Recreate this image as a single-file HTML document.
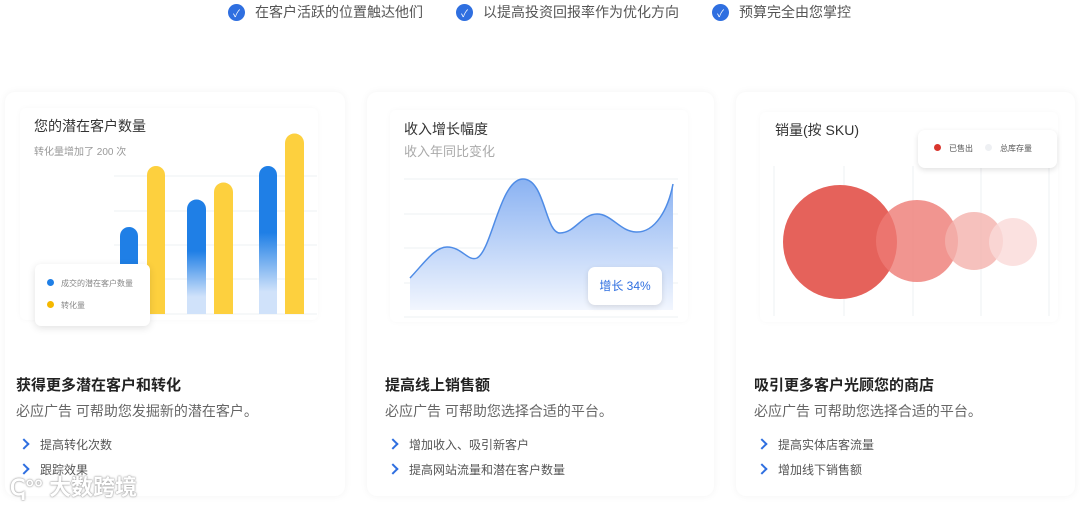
<!DOCTYPE html>
<html><head><meta charset="utf-8"><style>
*{margin:0;padding:0;box-sizing:border-box}
body{width:1080px;height:505px;overflow:hidden;background:#fff;font-family:"Liberation Sans","Noto Sans CJK SC",sans-serif;position:relative}
.a{position:absolute}
.top{top:2px;font-size:14px;color:#555;display:flex;align-items:center;gap:10px}
.ck{width:17px;height:17px;border-radius:50%;background:#2f6fe0;color:#fff;font-size:10px;display:flex;align-items:center;justify-content:center}
.card{background:#fff;border-radius:10px;box-shadow:0 0 8px rgba(0,0,0,.05);top:92px;height:404px}
.panel{background:#fff;border-radius:6px;box-shadow:0 0 6px rgba(0,0,0,.03)}
.t{font-size:15px;font-weight:bold;color:#222;top:374px}
.s{font-size:14px;color:#666;top:401px}
.b{font-size:12px;color:#555}
.b:before{content:"";position:absolute;left:-20px;top:4px;width:6px;height:6px;border-right:2px solid #2f6fe0;border-top:2px solid #2f6fe0;transform:rotate(45deg)}
</style></head><body>
<div class="a top" style="left:228px"><span class="ck">✓</span>在客户活跃的位置触达他们</div>
<div class="a top" style="left:456px"><span class="ck">✓</span>以提高投资回报率作为优化方向</div>
<div class="a top" style="left:712px"><span class="ck">✓</span>预算完全由您掌控</div>

<div class="a card" style="left:5px;width:340px"></div>
<div class="a card" style="left:367px;width:347px"></div>
<div class="a card" style="left:736px;width:339px"></div>

<div class="a panel" style="left:20px;top:108px;width:298px;height:212px"></div>
<div class="a panel" style="left:390px;top:110px;width:298px;height:212px"></div>
<div class="a panel" style="left:760px;top:112px;width:298px;height:210px"></div>

<div class="a" style="left:34px;top:116px;font-size:14px;color:#333">您的潜在客户数量</div>
<div class="a" style="left:34px;top:143px;font-size:10px;color:#999">转化量增加了 200 次</div>
<svg class="a" style="left:0;top:0" width="1080" height="505">
<defs>
<linearGradient id="bl" x1="0" y1="0" x2="0" y2="1" gradientUnits="objectBoundingBox"><stop offset="0.45" stop-color="#1f7fe6"/><stop offset="0.85" stop-color="#d0e2fa"/></linearGradient>
<linearGradient id="ar" x1="0" y1="179" x2="0" y2="310" gradientUnits="userSpaceOnUse"><stop offset="0" stop-color="#8ab2f2"/><stop offset="1" stop-color="#f2f6fe"/></linearGradient>
</defs>
<g stroke="#eef0f3" stroke-width="1">
<line x1="114" y1="176" x2="317" y2="176"/><line x1="114" y1="211" x2="317" y2="211"/><line x1="114" y1="245" x2="317" y2="245"/><line x1="114" y1="279" x2="317" y2="279"/><line x1="114" y1="314" x2="317" y2="314"/>
<line x1="404" y1="179" x2="678" y2="179"/><line x1="404" y1="214" x2="678" y2="214"/><line x1="404" y1="248" x2="678" y2="248"/><line x1="404" y1="283" x2="678" y2="283"/><line x1="404" y1="317" x2="678" y2="317"/>
<line x1="774" y1="166" x2="774" y2="316"/><line x1="844" y1="166" x2="844" y2="316"/><line x1="913" y1="166" x2="913" y2="316"/><line x1="981" y1="166" x2="981" y2="316"/><line x1="1049" y1="166" x2="1049" y2="316"/>
</g>
<path d="M120,236a9,9 0 0 1 18,0V314H120Z" fill="url(#bl)"/>
<path d="M187,209a9.5,9.5 0 0 1 19,0V314H187Z" fill="url(#bl)"/>
<path d="M259,175a9,9 0 0 1 18,0V314H259Z" fill="url(#bl)"/>
<path d="M147,175a9,9 0 0 1 18,0V314H147Z" fill="#fdd03e"/>
<path d="M214,192a9.5,9.5 0 0 1 19,0V314H214Z" fill="#fdd03e"/>
<path d="M285,143a9.5,9.5 0 0 1 19,0V314H285Z" fill="#fdd03e"/>
<path d="M410,278C425,262 435,247 447,247C462,247 468,262 477,258C492,250 500,179 523,179C545,179 545,233 560,233C575,233 582,214 597,214C612,214 620,232 637,232C655,232 668,210 673,184V310H410Z" fill="url(#ar)"/>
<path d="M410,278C425,262 435,247 447,247C462,247 468,262 477,258C492,250 500,179 523,179C545,179 545,233 560,233C575,233 582,214 597,214C612,214 620,232 637,232C655,232 668,210 673,184" fill="none" stroke="#4f8ce6" stroke-width="1.5"/>
<circle cx="840" cy="242" r="57" fill="#e5625b"/>
<circle cx="917" cy="241" r="41" fill="#ee7b74" opacity=".8"/>
<circle cx="974" cy="241" r="29" fill="#f4b1ad" opacity=".8"/>
<circle cx="1013" cy="242" r="24" fill="#fad9d8" opacity=".8"/>
</svg>
<div class="a" style="left:35px;top:264px;width:115px;height:62px;background:#fff;border-radius:6px;box-shadow:0 2px 8px rgba(0,0,0,.12);font-size:8px;color:#888">
<div style="position:absolute;left:12px;top:14px"><span style="display:inline-block;width:7px;height:7px;border-radius:50%;background:#1f7fe6;margin-right:7px"></span>成交的潜在客户数量</div>
<div style="position:absolute;left:12px;top:36px"><span style="display:inline-block;width:7px;height:7px;border-radius:50%;background:#f5b800;margin-right:7px"></span>转化量</div></div>

<div class="a" style="left:404px;top:119px;font-size:14px;color:#333">收入增长幅度</div>
<div class="a" style="left:404px;top:141px;font-size:13px;color:#aaa">收入年同比变化</div>
<div class="a" style="left:588px;top:267px;width:74px;height:38px;background:#fff;border-radius:7px;box-shadow:0 2px 6px rgba(0,0,0,.12);font-size:12px;color:#2f6fe0;text-align:center;line-height:38px">增长 34%</div>

<div class="a" style="left:775px;top:120px;font-size:14px;color:#333">销量(按 SKU)</div>
<div class="a" style="left:918px;top:130px;width:139px;height:38px;background:#fff;border-radius:7px;box-shadow:0 2px 6px rgba(0,0,0,.12);font-size:8px;color:#555;line-height:38px;padding-left:16px">
<span style="display:inline-block;width:7px;height:7px;border-radius:50%;background:#d9362e;margin-right:8px"></span>已售出<span style="display:inline-block;width:7px;height:7px;border-radius:50%;background:#eef0f3;margin:0 8px 0 12px"></span>总库存量</div>

<div class="a t" style="left:16px">获得更多潜在客户和转化</div>
<div class="a s" style="left:16px">必应广告 可帮助您发掘新的潜在客户。</div>
<div class="a b" style="left:40px;top:436px">提高转化次数</div>
<div class="a b" style="left:40px;top:461px">跟踪效果</div>

<div class="a t" style="left:385px">提高线上销售额</div>
<div class="a s" style="left:385px">必应广告 可帮助您选择合适的平台。</div>
<div class="a b" style="left:409px;top:436px">增加收入、吸引新客户</div>
<div class="a b" style="left:409px;top:461px">提高网站流量和潜在客户数量</div>

<div class="a t" style="left:754px">吸引更多客户光顾您的商店</div>
<div class="a s" style="left:754px">必应广告 可帮助您选择合适的平台。</div>
<div class="a b" style="left:778px;top:436px">提高实体店客流量</div>
<div class="a b" style="left:778px;top:461px">增加线下销售额</div>

<div class="a" style="left:10px;top:470px;font-size:22px;font-weight:bold;color:#fff;text-shadow:0 0 2px #999,0 0 1px #888">ↅ°° 大数跨境</div>
</body></html>
